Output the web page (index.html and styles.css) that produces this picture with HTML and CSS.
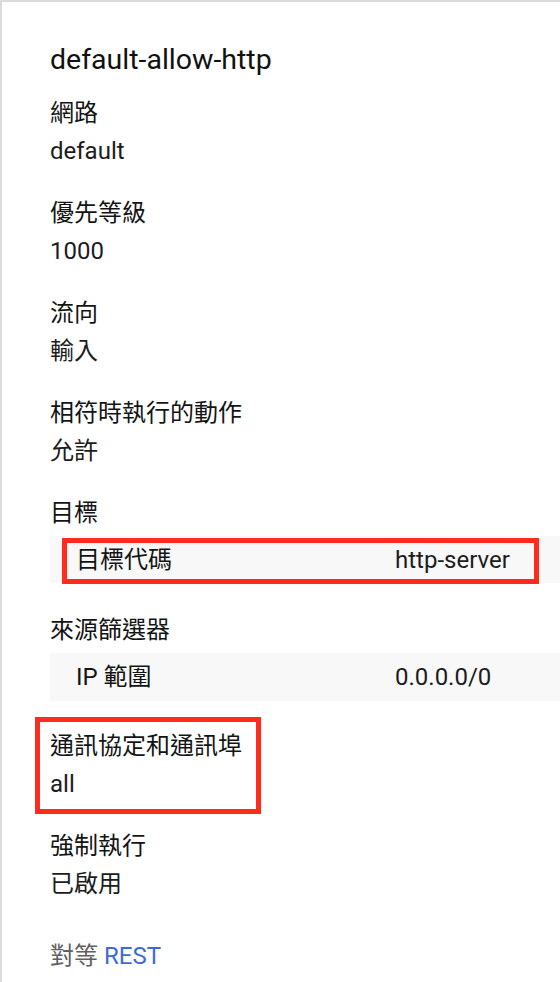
FILE: index.html
```html
<!DOCTYPE html>
<html lang="zh-Hant">
<head>
<meta charset="utf-8">
<title>default-allow-http</title>
<link rel="stylesheet" href="styles.css">
</head>
<body>
<div class="panel">
  <h1 class="title">default-allow-http</h1>

  <div class="field">
    <div class="label">網路</div>
    <div class="value">default</div>
  </div>

  <div class="field">
    <div class="label">優先等級</div>
    <div class="value">1000</div>
  </div>

  <div class="field">
    <div class="label">流向</div>
    <div class="value">輸入</div>
  </div>

  <div class="field">
    <div class="label">相符時執行的動作</div>
    <div class="value">允許</div>
  </div>

  <div class="field field-table">
    <div class="label">目標</div>
    <div class="row">
      <div class="cell-key">目標代碼</div>
      <div class="cell-val">http-server</div>
      <div class="mark mark-row"></div>
    </div>
  </div>

  <div class="field field-table">
    <div class="label">來源篩選器</div>
    <div class="row">
      <div class="cell-key">IP 範圍</div>
      <div class="cell-val">0.0.0.0/0</div>
    </div>
  </div>

  <div class="field marked">
    <div class="label">通訊協定和通訊埠</div>
    <div class="value">all</div>
    <div class="mark mark-field"></div>
  </div>

  <div class="field">
    <div class="label">強制執行</div>
    <div class="value">已啟用</div>
  </div>

  <div class="equiv">對等 <a class="rest" href="#">REST</a></div>
</div>
</body>
</html>
```

FILE: styles.css
```css
html, body {
  margin: 0;
  padding: 0;
  background: #ffffff;
}

body {
  font-family: Roboto, "Noto Sans CJK TC", "Noto Sans", sans-serif;
  color: #212121;
  overflow: hidden;
}

.panel {
  border-top: 2px solid #dcdcdc;
  border-left: 2px solid #dcdcdc;
  min-height: 100vh;
  padding: 38px 0 0 48px;
  box-sizing: border-box;
}

.title {
  margin: 0 0 14px 0;
  font-size: 28.5px;
  font-weight: 400;
  line-height: 40px;
  color: #111111;
}

.field {
  position: relative;
  margin-bottom: 24px;
  font-size: 24px;
  line-height: 38px;
}

.field-table {
  margin-bottom: 28px;
}

.label {
  color: #141414;
}

.value {
  color: #1c1c1c;
}

.row {
  position: relative;
  display: flex;
  align-items: center;
  margin-top: 4px;
  height: 47px;
  background: #f8f8f8;
  padding-left: 26px;
}

.field-table + .field-table {
  margin-bottom: 26px;
}

.field-table + .field-table .row {
  height: 48px;
}

.cell-key {
  width: 319px;
  color: #141414;
}

.cell-val {
  color: #1c1c1c;
}

.mark {
  position: absolute;
  border: 5px solid #ff2b1c;
  box-sizing: border-box;
  pointer-events: none;
}

.mark-row {
  left: 12px;
  top: 2px;
  width: 477px;
  height: 46px;
}

.mark-field {
  left: -15px;
  top: -10px;
  width: 226px;
  height: 97px;
}

.equiv {
  margin-top: 34px;
  font-size: 24px;
  line-height: 38px;
  color: #606060;
}

.rest {
  color: #3e6ad8;
  text-decoration: none;
}
```
